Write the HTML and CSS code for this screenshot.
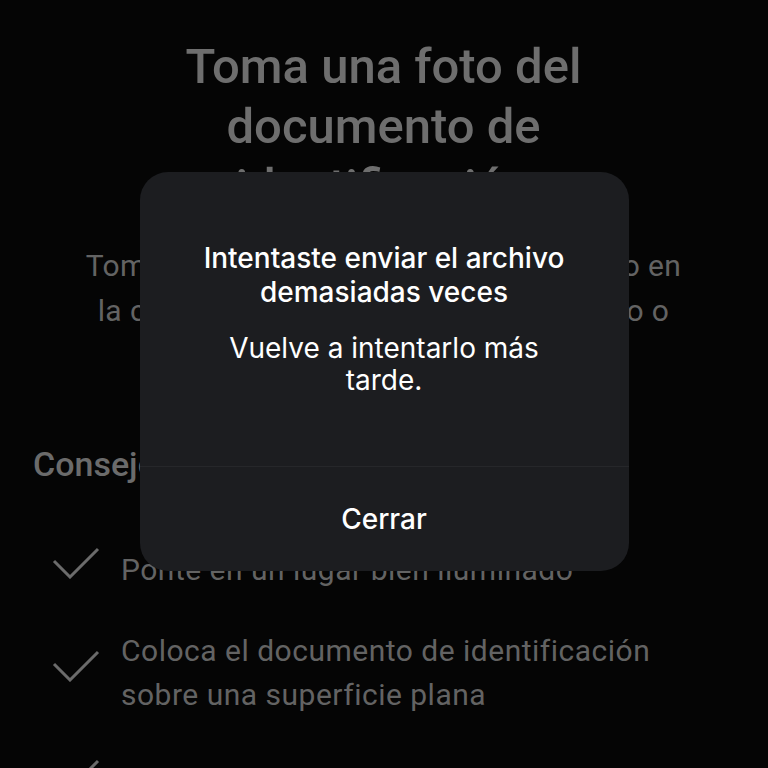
FILE: index.html
```html
<!DOCTYPE html>
<html lang="es">
<head>
<meta charset="utf-8">
<title>Documento de identificación</title>
<link rel="stylesheet" href="styles.css">
</head>
<body>
<main class="page">
  <h1 class="title">Toma una foto del documento de identificación</h1>
  <p class="subtitle">Toma una foto desde tu teléfono móvil o en<br>la cámara de tu computadora, escritorio o<br>sube una imagen.</p>
  <h2 class="tips-head">Consejos</h2>
  <ul class="tips">
    <li class="tip">
      <svg class="check" viewBox="0 0 48 32" width="48" height="32"><polyline points="2,14 18,30 46,2" fill="none" stroke="currentColor" stroke-width="3"/></svg>
      <span class="tip-text">Ponte en un lugar bien iluminado</span>
    </li>
    <li class="tip">
      <svg class="check" viewBox="0 0 48 32" width="48" height="32"><polyline points="2,14 18,30 46,2" fill="none" stroke="currentColor" stroke-width="3"/></svg>
      <span class="tip-text">Coloca el documento de identificación sobre una superficie plana</span>
    </li>
    <li class="tip tip-last">
      <svg class="check" viewBox="0 0 48 32" width="48" height="32"><polyline points="2,14 18,30 46,2" fill="none" stroke="currentColor" stroke-width="3"/></svg>
      <span class="tip-text">Evita los reflejos y las sombras</span>
    </li>
  </ul>
</main>
<div class="overlay">
  <div class="dialog" role="dialog">
    <div class="dialog-body">
      <h3 class="dialog-title">Intentaste enviar el archivo demasiadas veces</h3>
      <p class="dialog-text">Vuelve a intentarlo más tarde.</p>
    </div>
    <button class="dialog-btn">Cerrar</button>
  </div>
</div>
</body>
</html>
```

FILE: styles.css
```css
* { box-sizing: border-box; }
html, body {
  margin: 0;
  padding: 0;
  background: #050505;
  height: 768px;
  overflow: hidden;
}
body {
  font-family: Roboto, "Liberation Sans", sans-serif;
  color: #666666;
}
.page {
  padding: 37px 34px 0 33px;
}
.title {
  margin: 0 auto;
  width: 440px;
  text-align: center;
  font-size: 49px;
  line-height: 60px;
  font-weight: 500;
  color: #6e6e6e;
}
.subtitle {
  margin: 26px 0 0 0;
  text-align: center;
  font-size: 30px;
  line-height: 45px;
  letter-spacing: 0.4px;
  color: #636363;
  white-space: nowrap;
}
.tips-head {
  margin: 66px 0 0 0;
  font-size: 34px;
  line-height: 40px;
  font-weight: 500;
  color: #6b6b6b;
}
.tips {
  list-style: none;
  margin: 63px 0 0 0;
  padding: 0;
  display: flex;
  flex-direction: column;
  gap: 36px;
}
.tip {
  display: flex;
  align-items: center;
  gap: 21px;
  padding-left: 19px;
}
.tip-last {
  margin-top: 6px;
}
.check {
  flex: none;
  margin-bottom: 14px;
  color: #6b6b6b;
}
.tip-text {
  font-size: 30px;
  line-height: 44px;
  letter-spacing: 0.5px;
  color: #636363;
}
.overlay {
  position: fixed;
  inset: 0;
  display: flex;
  justify-content: center;
  align-items: flex-start;
  padding-top: 172px;
}
.dialog {
  width: 489px;
  height: 399px;
  background: #1c1d20;
  border-radius: 28px;
  display: flex;
  flex-direction: column;
  font-family: Inter, Roboto, sans-serif;
  color: #ffffff;
}
.dialog-body {
  flex: none;
  height: 295px;
  padding: 69px 54px 0 54px;
  text-align: center;
  border-bottom: 1px solid #26272a;
}
.dialog-title {
  margin: 0;
  font-size: 28px;
  line-height: 34px;
  font-weight: 500;
}
.dialog-text {
  margin: 23px 0 0 0;
  font-size: 28px;
  line-height: 32px;
  font-weight: 400;
}
.dialog-btn {
  flex: 1;
  background: transparent;
  border: 0;
  color: #ffffff;
  font-family: Inter, Roboto, sans-serif;
  font-size: 28px;
  font-weight: 500;
  padding: 0;
}
```
